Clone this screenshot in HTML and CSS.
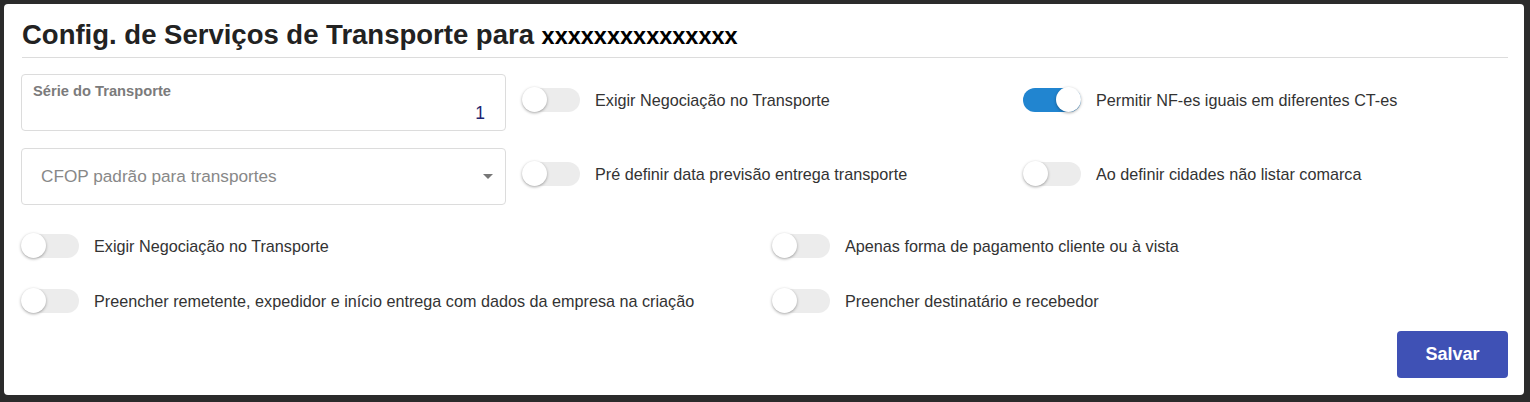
FILE: index.html
```html
<!DOCTYPE html>
<html lang="pt-BR">
<head>
<meta charset="utf-8">
<title>Config. de Serviços de Transporte</title>
<link rel="stylesheet" href="styles.css">
</head>
<body>
<div class="card">
  <h1 class="title">Config. de Serviços de Transporte para <span class="name">xxxxxxxxxxxxxxx</span></h1>
  <div class="divider"></div>
  <div class="top-grid">
    <div class="field">
      <label class="field-label">Série do Transporte</label>
      <div class="field-value">1</div>
    </div>
    <div class="toggle-cell">
      <span class="switch"><span class="knob"></span></span>
      <span class="toggle-label">Exigir Negociação no Transporte</span>
    </div>
    <div class="toggle-cell">
      <span class="switch on"><span class="knob"></span></span>
      <span class="toggle-label">Permitir NF-es iguais em diferentes CT-es</span>
    </div>
    <div class="select">
      <span class="placeholder">CFOP padrão para transportes</span>
      <span class="caret"></span>
    </div>
    <div class="toggle-cell">
      <span class="switch"><span class="knob"></span></span>
      <span class="toggle-label">Pré definir data previsão entrega transporte</span>
    </div>
    <div class="toggle-cell">
      <span class="switch"><span class="knob"></span></span>
      <span class="toggle-label">Ao definir cidades não listar comarca</span>
    </div>
  </div>
  <div class="bottom-grid">
    <div class="toggle-cell">
      <span class="switch"><span class="knob"></span></span>
      <span class="toggle-label">Exigir Negociação no Transporte</span>
    </div>
    <div class="toggle-cell">
      <span class="switch"><span class="knob"></span></span>
      <span class="toggle-label">Apenas forma de pagamento cliente ou à vista</span>
    </div>
    <div class="toggle-cell">
      <span class="switch"><span class="knob"></span></span>
      <span class="toggle-label">Preencher remetente, expedidor e início entrega com dados da empresa na criação</span>
    </div>
    <div class="toggle-cell">
      <span class="switch"><span class="knob"></span></span>
      <span class="toggle-label">Preencher destinatário e recebedor</span>
    </div>
  </div>
  <div class="actions">
    <button class="btn-save" type="button">Salvar</button>
  </div>
</div>
</body>
</html>
```
FILE: styles.css
```css
html, body {
  margin: 0;
  padding: 0;
}
body {
  background: #2b2b2b;
  padding: 4px 6px 7px 4px;
  font-family: "Liberation Sans", Arial, sans-serif;
  color: #333;
  box-sizing: border-box;
  height: 402px;
}
.card {
  background: #fff;
  border-radius: 4px;
  height: 391px;
  box-sizing: border-box;
  padding: 16px 16px 17px 18px;
  display: flex;
  flex-direction: column;
}
.title {
  margin: 0;
  height: 30px;
  font-size: 27.5px;
  line-height: 30px;
  font-weight: bold;
  color: #222;
  white-space: nowrap;
}
.title .name {
  color: #000;
  font-size: 23.5px;
}
.divider {
  height: 1px;
  background: #dcdcdc;
  margin-top: 7px;
}
.top-grid {
  margin-top: 16px;
  display: grid;
  grid-template-columns: 485px 485px 1fr;
  grid-template-rows: 57px 57px;
  column-gap: 16px;
  row-gap: 17px;
  margin-left: -1px;
}
.field, .select {
  border: 1px solid #dcdcdc;
  border-radius: 4px;
  box-sizing: border-box;
}
.field {
  padding: 8px 20px 0 11px;
  display: flex;
  flex-direction: column;
}
.field-label {
  font-size: 14.7px;
  font-weight: bold;
  color: #7b7b7b;
  line-height: 17px;
}
.field-value {
  text-align: right;
  font-size: 17.5px;
  color: #1e2470;
  margin-top: 3px;
  line-height: 20px;
}
.select {
  display: flex;
  align-items: center;
  padding: 0 12px 0 19px;
}
.placeholder {
  flex: 1;
  font-size: 17.2px;
  color: #888;
}
.caret {
  width: 0;
  height: 0;
  border-left: 5px solid transparent;
  border-right: 5px solid transparent;
  border-top: 5px solid #777;
}
.toggle-cell {
  display: flex;
  align-items: center;
}
.top-grid .toggle-cell {
  padding-bottom: 5px;
}
.switch {
  position: relative;
  width: 58px;
  height: 24px;
  border-radius: 12px;
  background: #ececec;
  flex: none;
  margin-right: 15px;
}
.switch .knob {
  position: absolute;
  left: 0;
  top: -1px;
  width: 25px;
  height: 25px;
  border-radius: 50%;
  background: #fff;
  box-shadow: 0 1px 3px rgba(0, 0, 0, 0.35);
}
.switch.on {
  background: #2185d0;
}
.switch.on .knob {
  left: auto;
  right: 0;
}
.toggle-label {
  font-size: 16.2px;
  color: #333;
}
.bottom-grid {
  margin-top: 29px;
  display: grid;
  grid-template-columns: 735px 1fr;
  column-gap: 16px;
  row-gap: 31px;
  margin-left: -1px;
}
.bottom-grid .toggle-cell {
  height: 24px;
}
.actions {
  margin-top: auto;
  display: flex;
  justify-content: flex-end;
}
.btn-save {
  width: 111px;
  height: 47px;
  border: none;
  border-radius: 4px;
  background: #3f51b5;
  color: #fff;
  font-family: "Liberation Sans", Arial, sans-serif;
  font-weight: bold;
  font-size: 18px;
  cursor: pointer;
}
```
